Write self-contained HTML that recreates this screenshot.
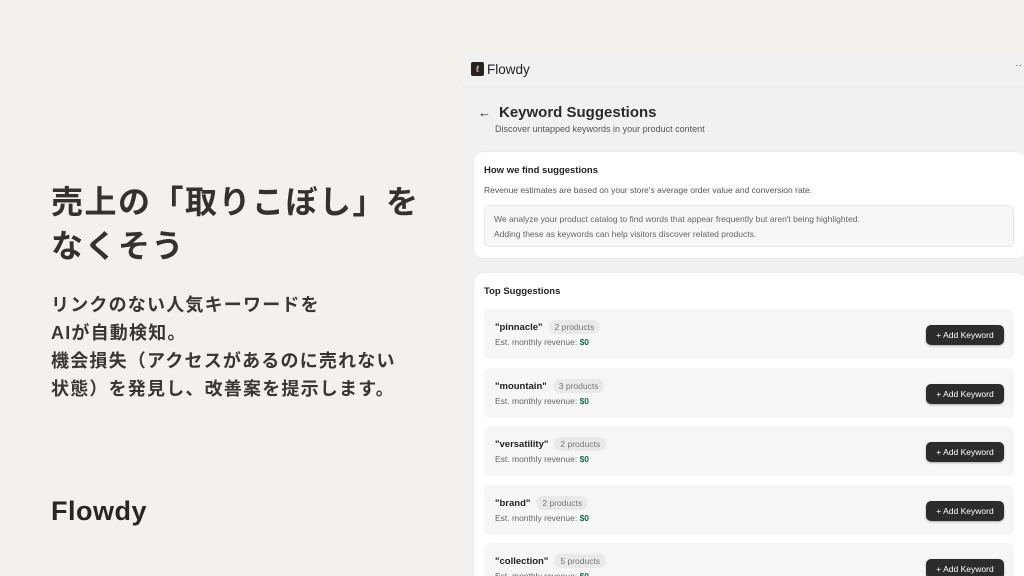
<!DOCTYPE html>
<html><head><meta charset="utf-8"><style>
*{margin:0;padding:0;box-sizing:border-box}
html,body{width:1024px;height:576px;overflow:hidden}
body{background:#f4f1ec;font-family:"Liberation Sans","Noto Sans CJK JP",sans-serif;position:relative;color:#2e2b28}
.h1{position:absolute;left:51px;top:180px;font-size:32px;font-weight:700;line-height:44px;letter-spacing:1.5px;color:#35322e}
.sub{position:absolute;left:51px;top:291px;font-size:18px;font-weight:700;line-height:28px;color:#3a3733;letter-spacing:1.2px}
.logo{position:absolute;left:51px;top:496px;font-size:27px;font-weight:700;color:#2b2622;letter-spacing:.5px}
.app{position:absolute;left:462px;top:52px;width:562px;height:524px;background:#f1f1f1;border-radius:6px 0 0 0;overflow:hidden}
.hdr{height:35px;border-bottom:1px solid #e6e6e6;display:flex;align-items:center;padding-left:9px;font-size:13.5px;font-weight:400;color:#222}
.ic{width:13px;height:14px;background:#2a221e;border-radius:2px;margin-right:3px;color:#fff;font-size:9px;text-align:center;line-height:14px}
.dots{position:absolute;right:2px;top:8px;font-size:10px;color:#555}
.title{position:absolute;left:16px;top:52px;font-size:15px;font-weight:700;color:#2a2a2a}
.title span{font-weight:400;margin-right:8px;font-size:13px}
.desc{position:absolute;left:33px;top:72px;font-size:9px;color:#555}
.card{position:absolute;left:12px;width:552px;background:#fff;border-radius:9px;box-shadow:0 0 1px rgba(0,0,0,.15)}
.c1{top:100px;height:106px}
.c2{top:221px;height:320px}
.ct{position:absolute;left:10px;font-size:9.5px;font-weight:700;color:#222}
.t9{font-size:8.5px;color:#555;position:absolute;left:10px}
.box{position:absolute;left:10px;top:53px;width:530px;height:42px;background:#f6f6f6;border:1px solid #e8e8e8;border-radius:5px;padding:6px 9px;font-size:8.5px;line-height:15px;color:#666}
.row{position:absolute;left:10px;width:530px;height:50px;background:#f6f6f6;border-radius:6px}
.kw{position:absolute;left:11px;top:11px;font-size:9.5px;font-weight:700;color:#222;display:flex;align-items:center}
.pill{margin-left:6px;background:#e9e9e9;border-radius:7px;padding:2px 6px;font-size:8.5px;font-weight:400;color:#777}
.rev{position:absolute;left:11px;top:28px;font-size:8.5px;color:#666}
.rev b{color:#1e6b55}
.btn{position:absolute;right:10px;top:16px;width:78px;height:20px;background:#2c2c2c;border-radius:5px;color:#fff;font-size:8.5px;font-weight:400;text-align:center;line-height:20px;box-shadow:0 1px 2px rgba(0,0,0,.3)}
</style></head><body>
<div class="h1">売上の「取りこぼし」を<br>なくそう</div>
<div class="sub">リンクのない人気キーワードを<br>AIが自動検知。<br>機会損失（アクセスがあるのに売れない<br>状態）を発見し、改善案を提示します。</div>
<div class="logo">Flowdy</div>
<div class="app">
<div class="hdr"><div class="ic">ℓ</div>Flowdy<div class="dots">··</div></div>
<div class="title"><span>←</span>Keyword Suggestions</div>
<div class="desc">Discover untapped keywords in your product content</div>
<div class="card c1">
<div class="ct" style="top:13px">How we find suggestions</div>
<div class="t9" style="top:33px">Revenue estimates are based on your store's average order value and conversion rate.</div>
<div class="box">We analyze your product catalog to find words that appear frequently but aren't being highlighted.<br>Adding these as keywords can help visitors discover related products.</div>
</div>
<div class="card c2">
<div class="ct" style="top:13px">Top Suggestions</div>
<div class="row" style="top:36px"><div class="kw">"pinnacle"<span class="pill">2 products</span></div><div class="rev">Est. monthly revenue: <b>$0</b></div><div class="btn">+ Add Keyword</div></div>
<div class="row" style="top:95px"><div class="kw">"mountain"<span class="pill">3 products</span></div><div class="rev">Est. monthly revenue: <b>$0</b></div><div class="btn">+ Add Keyword</div></div>
<div class="row" style="top:153px"><div class="kw">"versatility"<span class="pill">2 products</span></div><div class="rev">Est. monthly revenue: <b>$0</b></div><div class="btn">+ Add Keyword</div></div>
<div class="row" style="top:212px"><div class="kw">"brand"<span class="pill">2 products</span></div><div class="rev">Est. monthly revenue: <b>$0</b></div><div class="btn">+ Add Keyword</div></div>
<div class="row" style="top:270px"><div class="kw">"collection"<span class="pill">5 products</span></div><div class="rev">Est. monthly revenue: <b>$0</b></div><div class="btn">+ Add Keyword</div></div>
</div>
</div>
</body></html>
